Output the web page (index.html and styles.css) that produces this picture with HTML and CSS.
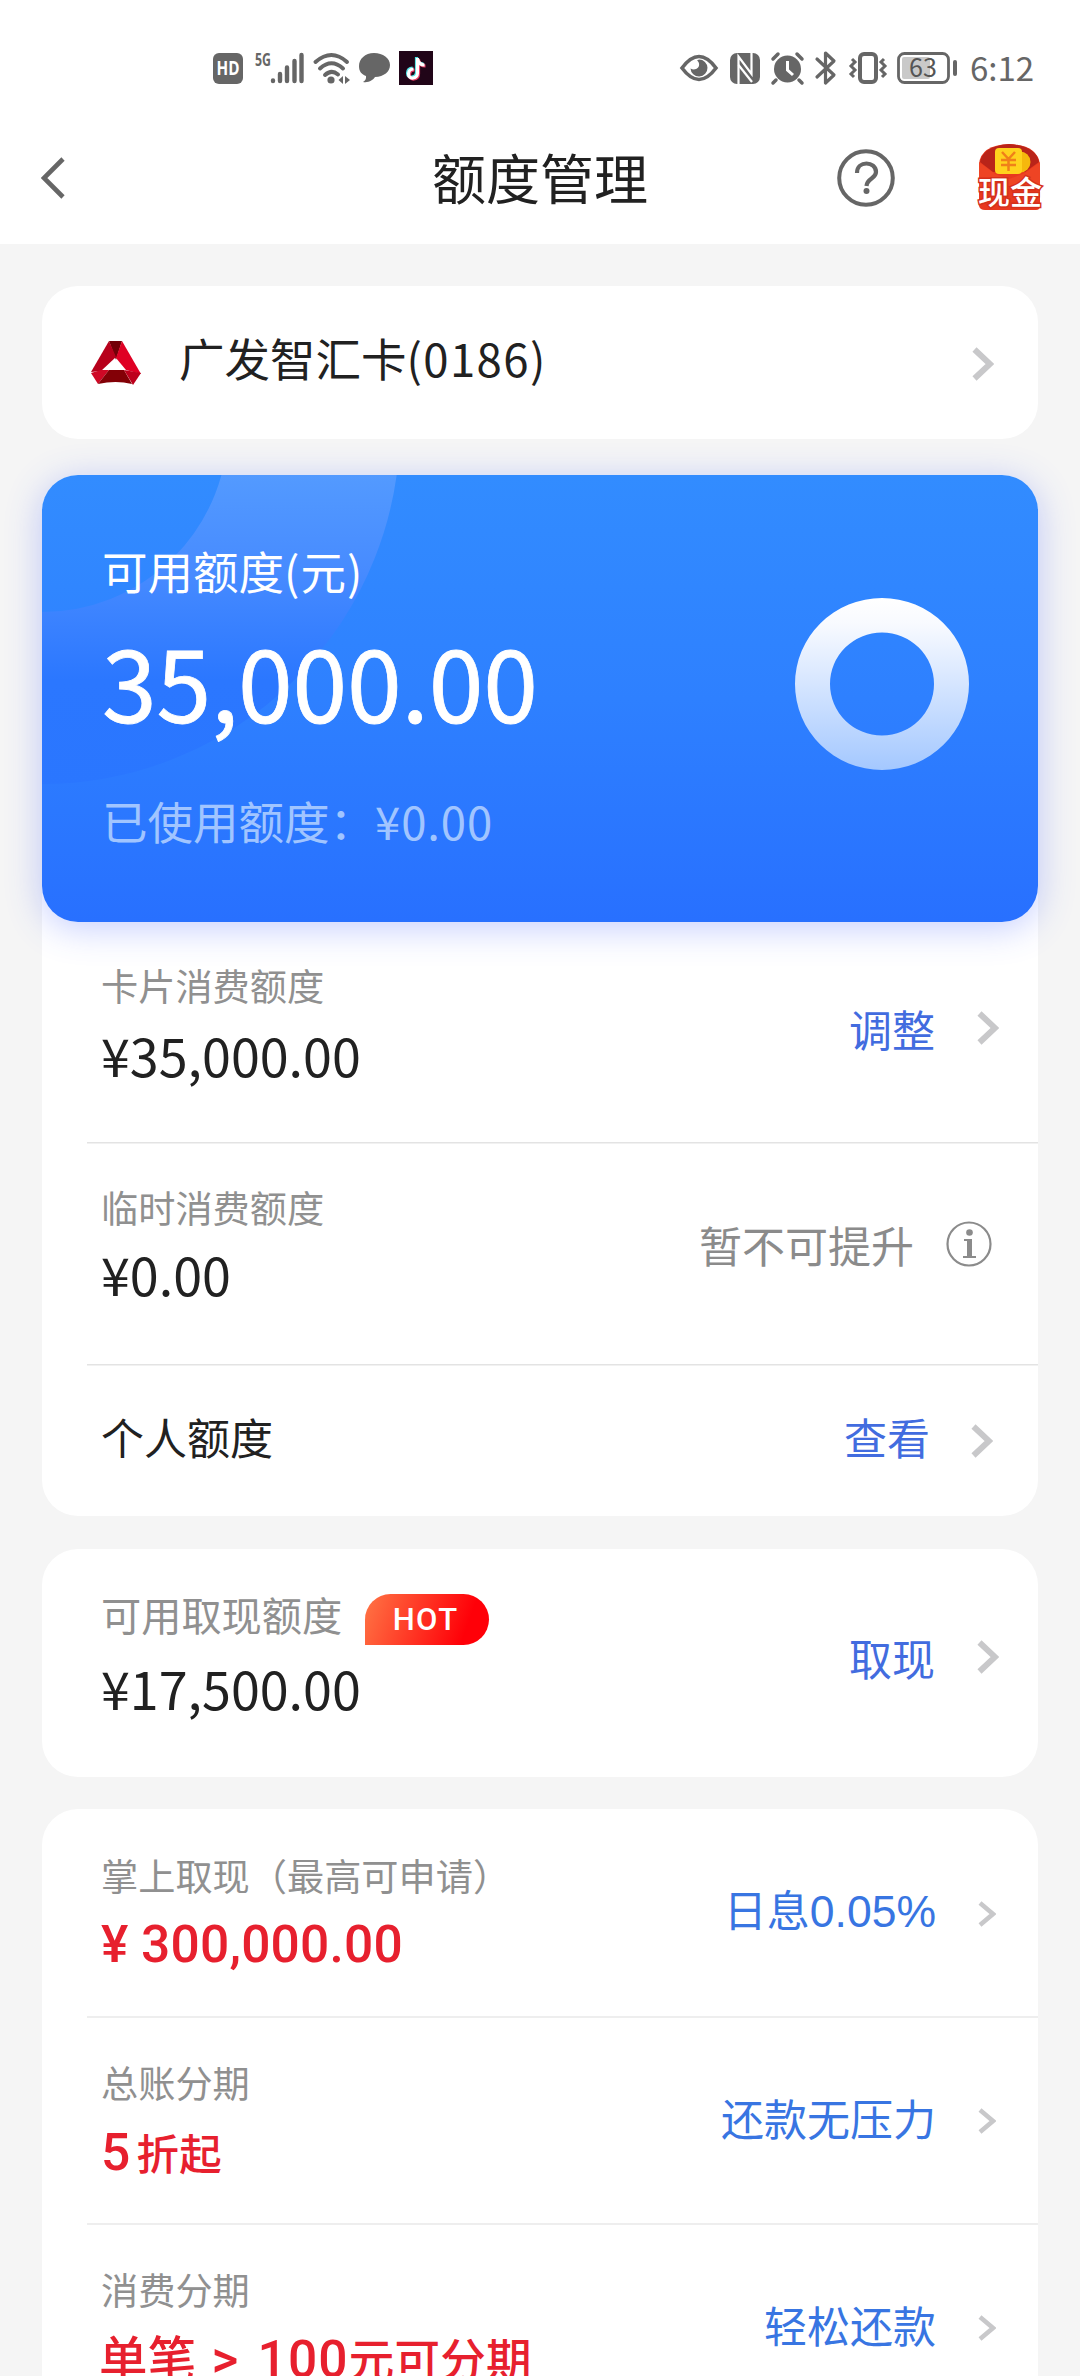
FILE: index.html
```html
<!DOCTYPE html>
<html lang="zh-CN">
<head>
<meta charset="utf-8">
<title>额度管理</title>
<link rel="stylesheet" href="styles.css">
</head>
<body>
<svg class="defs" width="0" height="0" aria-hidden="true">
  <symbol id="chevron" viewBox="0 0 22 34"><path d="M2.500 2.500 18 17 2.500 31.500" fill="none" stroke="#c8c8ca" stroke-width="6"/></symbol>
  <symbol id="chevron-small" viewBox="0 0 18 26"><path d="M2 2 15 13 2 24" fill="none" stroke="#c8c8ca" stroke-width="4.500"/></symbol>
</svg>
<div class="screen">
  <div class="statusbar">
    <div class="status-left">
      <svg width="30" height="31" viewBox="0 0 30 31"><rect width="30" height="31" rx="6" fill="#666"/><text x="15" y="22" text-anchor="middle" class="hd" textLength="23" lengthAdjust="spacingAndGlyphs">HD</text></svg>
      <svg class="signal" width="50" height="32" viewBox="0 0 50 32">
        <text x="0" y="14" class="fiveg" textLength="16" lengthAdjust="spacingAndGlyphs">5G</text>
        <path d="M18 28.500v.5M25 22v7M32 15.500v13.500M39.500 9v20M46.500 3v26" stroke="#666" stroke-width="4.400" stroke-linecap="round"/>
      </svg>
      <svg class="wifi" width="38" height="32" viewBox="0 0 38 32">
        <g fill="none" stroke="#666" stroke-width="4" stroke-linecap="round"><path d="M2.500 10Q18.500-4 34 10M7 16.500Q18.500 6 30 16.500M12 23Q18.500 17 25 22.500"/></g>
        <circle cx="18" cy="28" r="3.600" fill="#666"/><path d="M25.500 28l4.500-4v8zM32 24l5 4-5 4z" fill="#666"/>
      </svg>
      <svg class="bubble" width="33" height="32" viewBox="0 0 33 32"><path d="M16 1C7 1 1 7 1 14c0 5 2 8 7 10 .5 3-1 5-3 6 6 1 10-2 12-5 9-.5 15-5 15-12C32 6 25 1 16 1z" fill="#666"/></svg>
      <svg class="tiktok" width="34" height="34" viewBox="0 0 34 34"><rect width="34" height="34" fill="#210518"/>
        <g fill="none" stroke-width="3.200"><path d="M17.500 6v15c0 6-9 7-9 1 0-3 2-5 5-5M17.500 7c1 4 4 6 7 6" stroke="#4fe3e3"/><path d="M19.500 8v15c0 6-9 7-9 1 0-3 2-5 5-5M19.500 9c1 4 4 6 7 6" stroke="#e83a64"/><path d="M18.500 7v15c0 6-9 7-9 1 0-3 2-5 5-5M18.500 8c1 4 4 6 7 6" stroke="#fff"/></g>
      </svg>
    </div>
    <div class="status-right">
      <svg width="38" height="32" viewBox="0 0 38 32"><path d="M2 16Q19-7 36 16 19 39 2 16z" fill="none" stroke="#666" stroke-width="3.600"/><path d="M19 7.500a8.500 8.500 0 1 1-8.500 9c4 2.500 9.500 0 8.500-5-.3-1.500-1-2.500-2-3z" fill="#666"/></svg>
      <svg class="nfc" width="30" height="31" viewBox="0 0 30 31"><rect width="30" height="31" rx="7" fill="#666"/><path d="M8.500 31V3.500L21.500 21V0" fill="none" stroke="#fff" stroke-width="2.200"/><path d="M8.500 12L22 29" stroke="#fff" stroke-width="2.200" fill="none"/></svg>
      <svg class="alarm" width="33" height="32" viewBox="0 0 33 32"><circle cx="16.500" cy="17" r="13.500" fill="#666"/><path d="M2 7l5-5M31 7l-5-5M5 28l-3 3M28 28l3 3" stroke="#666" stroke-width="3.500" stroke-linecap="round"/><path d="M16.500 9v9l5.500 5" fill="none" stroke="#fff" stroke-width="3"/></svg>
      <svg class="bt" width="21" height="34" viewBox="0 0 21 34"><path d="M2 8l17 16-8.500 8V2l8.500 8L2 26" fill="none" stroke="#666" stroke-width="3.200" stroke-linejoin="round" stroke-linecap="round"/></svg>
      <svg class="vibrate" width="38" height="32" viewBox="0 0 38 32"><rect x="11" y="2" width="16" height="28" rx="4" fill="none" stroke="#666" stroke-width="4"/><path d="M3 7l3 3-4 4 4 4-4 4 3 3M35 7l-3 3 4 4-4 4 4 4-3 3" fill="none" stroke="#666" stroke-width="3"/></svg>
      <svg class="battery" width="61" height="32" viewBox="0 0 61 32"><rect x="1.500" y="1.500" width="50" height="29" rx="6" fill="none" stroke="#666" stroke-width="2.800"/><rect x="5" y="5" width="28" height="22" rx="2" fill="#c9c9c9"/><path d="M58 10v12" stroke="#666" stroke-width="4" stroke-linecap="round"/><text x="26" y="25" text-anchor="middle" class="level">63</text></svg>
      <span class="clock">6:12</span>
    </div>
  </div>

  <header class="titlebar">
    <svg class="back" width="26" height="42" viewBox="0 0 26 42"><path d="M22 2 3 21l19 19" fill="none" stroke="#666" stroke-width="4.600"/></svg>
    <h1>额度管理</h1>
    <div class="actions">
      <svg width="58" height="58" viewBox="0 0 58 58"><circle cx="29" cy="29" r="26.800" fill="none" stroke="#666" stroke-width="4"/><path d="M20 24c0-13 19-12 19-1 0 7-9 6-9.500 14" fill="none" stroke="#666" stroke-width="4.200"/><circle cx="29.500" cy="42" r="3" fill="#666"/></svg>
      <svg class="cash" width="70" height="70" viewBox="0 0 70 70">
        <path d="M4 22Q6 3 34 2 62 3 65 22v42q0 4-4 4H10q-5 0-6-4z" fill="#e8391f"/>
        <path d="M5 20Q8 4 34 2q27 2 30 18L50 30H18z" fill="#b92419"/>
        <path d="M4 20l16 12 14 5 16-6 15-11v26H4z" fill="#ee4424"/>
        <circle cx="45" cy="20" r="10.500" fill="#f6b80d"/><rect x="20" y="6" width="27" height="26" rx="4" fill="#ffd21d"/>
        <path d="M27 10l6.500 7L40 10M26 18h15M26 23h15M33.500 17v12" fill="none" stroke="#f08019" stroke-width="2.500"/>
        <text x="35" y="62" text-anchor="middle" class="cash-text">现金</text>
      </svg>
    </div>
  </header>

  <main>
    <section class="card bank">
      <svg width="50" height="44" viewBox="0 0 50 44">
        <path d="M18 0h13L25 19z" fill="#720007"/><path d="M18 0l7 16L10 30 0 31z" fill="#b7001b"/><path d="M31 0l19 33-15-4-10-12z" fill="#df0024"/>
        <path d="M0 32l10-3 8 0L7 43z" fill="#cf0825"/><path d="M18 29h15l8 14Q25 39 7 43z" fill="#830006"/><path d="M33 29l17 3-8 12z" fill="#bd001c"/><path d="M25 18l-6 11h12z" fill="#fff"/>
      </svg>
      <span class="bank-name">广发智汇卡<span class="digits">(0186)</span></span>
      <svg class="bank-arrow" width="22" height="34"><use href="#chevron"/></svg>
    </section>

    <section class="card limits">
      <div class="hero">
        <svg class="hero-arc" width="360" height="320" viewBox="0 0 360 320">
          <defs><linearGradient id="arc" x1="0" y1="0" x2="0" y2="320" gradientUnits="userSpaceOnUse"><stop offset="0" stop-color="#539aff"/><stop offset=".3" stop-color="#478bff"/><stop offset=".64" stop-color="#2b77ff"/><stop offset="1" stop-color="#2a76ff"/></linearGradient></defs>
          <circle cx="0" cy="-49" r="272" fill="none" stroke="url(#arc)" stroke-width="172"/>
        </svg>
        <div class="hero-text">
          <div class="hero-label">可用额度<span class="unit">(元)</span></div>
          <div class="hero-amount">35,000.00</div>
          <div class="hero-used">已使用额度：<span class="used-sum">¥0.00</span></div>
        </div>
        <svg class="ring" width="174" height="172" viewBox="0 0 174 172">
          <defs><linearGradient id="ring" x1="0" y1="0" x2="0" y2="172" gradientUnits="userSpaceOnUse"><stop offset="0" stop-color="#fff"/><stop offset=".15" stop-color="#f8faff"/><stop offset="1" stop-color="#a4c8ff"/></linearGradient></defs>
          <path fill-rule="evenodd" fill="url(#ring)" d="M87 0a87 86 0 0 1 0 172a87 86 0 0 1 0-172zM87 34.500a52 51.500 0 0 0 0 103a52 51.500 0 0 0 0-103z"/>
        </svg>
      </div>
      <div class="row r-card">
        <div><div class="label">卡片消费额度</div><div class="amount">¥35,000.00</div></div>
        <div class="side"><span>调整</span><svg width="22" height="34"><use href="#chevron"/></svg></div>
      </div>
      <div class="row r-temp">
        <div><div class="label">临时消费额度</div><div class="amount">¥0.00</div></div>
        <div class="side muted"><span>暂不可提升</span>
          <svg width="46" height="46" viewBox="0 0 46 46"><circle cx="23" cy="23" r="21.500" fill="none" stroke="#8b8b8b" stroke-width="2.200"/><circle cx="23.500" cy="11.500" r="3.300" fill="#8b8b8b"/><path d="M18 18h8v17h4v2H17v-2h4V20h-3z" fill="#8b8b8b"/></svg></div>
      </div>
      <div class="row r-personal">
        <div class="name">个人额度</div>
        <div class="side"><span>查看</span><svg width="22" height="34"><use href="#chevron"/></svg></div>
      </div>
    </section>

    <section class="card withdraw">
      <div class="row">
        <div><div class="label large">可用取现额度<span class="hot">HOT</span></div><div class="amount">¥17,500.00</div></div>
        <div class="side"><span>取现</span><svg width="22" height="34"><use href="#chevron"/></svg></div>
      </div>
    </section>

    <section class="card offers">
      <div class="row">
        <div><div class="label">掌上取现（最高可申请）</div><div class="promo"><span class="yen">¥</span>300,000.00</div></div>
        <div class="side"><span>日息<span class="rate">0.05%</span></span><svg width="18" height="26"><use href="#chevron-small"/></svg></div>
      </div>
      <div class="row">
        <div><div class="label">总账分期</div><div class="promo">5<span class="zh">折起</span></div></div>
        <div class="side"><span>还款无压力</span><svg width="18" height="26"><use href="#chevron-small"/></svg></div>
      </div>
      <div class="row">
        <div><div class="label">消费分期</div><div class="promo last"><span class="zh wide">单笔</span><span class="gt">&gt;</span><span class="num">100</span><span class="zh mid">元可分期</span></div></div>
        <div class="side"><span>轻松还款</span><svg width="18" height="26"><use href="#chevron-small"/></svg></div>
      </div>
    </section>
  </main>
</div>
</body>
</html>
```

FILE: styles.css
```css
* { box-sizing: border-box; }
body { margin: 0; background: #f5f5f5; font-family: "Noto Sans CJK SC", sans-serif; color: #212121; }
svg { display: block; flex: none; }
.defs { position: absolute; }
.screen { width: 1080px; height: 2376px; overflow: hidden; }

.statusbar { height: 110px; padding: 26px 46px 0 213px; background: #fff; display: flex; justify-content: space-between; align-items: center; }
.statusbar svg { overflow: visible; }
.status-left, .status-right { display: flex; align-items: center; }
.signal { margin-left: 12px; }
.wifi { margin-left: 8px; }
.bubble { margin-left: 7px; }
.tiktok { margin-left: 8px; }
.nfc { margin-left: 12px; }
.alarm { margin-left: 11px; }
.bt { margin-left: 11px; }
.vibrate { margin-left: 13px; }
.battery { margin-left: 10px; }
.clock { margin-left: 12px; width: 64px; font-size: 33px; line-height: 50px; margin-top: -2px; color: #666; white-space: nowrap; }
.hd { font: 700 20px "Open Sans", sans-serif; fill: #fff; }
.fiveg { font: 700 18px "Open Sans", sans-serif; fill: #666; }
.level { font: 400 25px "Noto Sans CJK SC", sans-serif; fill: #555; }

.titlebar { height: 134px; padding: 0 36px 0 41px; background: #fff; display: grid; grid-template-columns: 1fr auto 1fr; align-items: center; }
.titlebar h1 { margin: 0; font-size: 54px; font-weight: 400; line-height: 80px; padding-right: 5px; }
.actions { display: flex; align-items: center; justify-content: flex-end; gap: 80px; }
.back { margin-top: 2px; }
.actions svg:first-child { margin-top: 2px; }
.cash-text { font: 500 32px "Noto Sans CJK SC", sans-serif; fill: #fff; stroke: #d5301c; stroke-width: 3px; paint-order: stroke; }
.cash { overflow: visible; margin-right: -1px; }

main { padding: 42px 42px 0; }
.card { background: #fff; border-radius: 36px; }
.bank { height: 153px; padding: 0 44px 0 49px; display: flex; align-items: center; }
.bank-name { margin-left: 38px; font-size: 45.500px; line-height: 66px; margin-top: -11px; }
.digits { letter-spacing: 1.400px; }
.bank-arrow { margin-left: auto; margin-top: 2px; }

.limits { margin-top: 36px; height: 1041px; }
.hero { position: relative; height: 447px; border-radius: 36px; background: linear-gradient(#328cff, #2e80ff 50%, #2870ff); box-shadow: 0 6px 36px rgba(60, 90, 255, .3); display: flex; justify-content: space-between; padding: 0 69px 0 60px; color: #fff; }
.hero-arc { position: absolute; left: 0; top: 0; border-top-left-radius: 36px; overflow: hidden; }
.hero-text { position: relative; padding-top: 62px; white-space: nowrap; }
.hero-label { font-size: 45.500px; line-height: 66px; }
.unit { letter-spacing: 1px; }
.hero-amount { font-size: 98.500px; line-height: 120px; margin-top: 17px; letter-spacing: -.2px; -webkit-text-stroke: .8px #fff; }
.hero-used { font-size: 45.500px; line-height: 66px; margin-top: 47px; color: #a1c5ff; }
.used-sum { letter-spacing: .9px; }
.ring { margin-top: 123px; }

.row { display: flex; justify-content: space-between; position: relative; padding-left: 59px; }
.label { font-size: 37.200px; line-height: 50px; color: #909090; white-space: nowrap; }
.label.large { display: flex; align-items: center; font-size: 40.200px; line-height: 54px; }
.amount { font-size: 52px; line-height: 70px; }
.name { font-size: 43px; line-height: 60px; }
.side { display: flex; align-items: center; height: 60px; gap: 42px; padding-right: 39px; font-size: 43px; line-height: 60px; color: #426cdf; white-space: nowrap; }
.r-card { height: 220px; padding-top: 38px; }
.r-card .amount { margin-top: 10px; }
.r-card .side { margin-top: 38px; }
.r-temp { height: 222px; padding-top: 40px; }
.r-temp .amount { margin-top: 7px; }
.side.muted { margin-top: 32px; gap: 32px; padding-right: 46px; color: #8b8b8b; }
.r-temp, .r-personal, .offers .row + .row { background: linear-gradient(#e3e3e3, #e3e3e3) 45px 0 / calc(100% - 45px) 2px no-repeat; }
.r-temp, .r-personal { background-position-y: -.5px; }
.r-personal { padding-top: 42px; }
.r-personal .side { gap: 41px; padding-right: 45px; }
.r-personal .side svg { margin-top: 10px; }

.withdraw { margin-top: 33px; height: 228px; padding-top: 38px; }
.withdraw .amount { margin-top: 12px; }
.withdraw .side { margin-top: 40px; }
.hot { margin-left: 23px; margin-top: 11px; width: 124px; height: 51px; border-radius: 26px 26px 26px 0; background: linear-gradient(110deg, #ff7545, #ff0008 80%); color: #fff; font: 500 31px/51px Roboto, sans-serif; letter-spacing: 1.500px; text-align: center; padding-right: 3px; }
.withdraw .label { height: 54px; }

.offers { margin-top: 32px; height: 700px; }
.offers .row { height: 207px; padding-top: 41px; }
.offers .row + .row { background-image: linear-gradient(#eee, #eee); }
.offers .side { margin-top: 30px; color: #3875e2; padding-right: 42px; }
.offers .side svg { margin-top: 8px; }
.rate { font-family: "Liberation Sans", sans-serif; font-size: 44.500px; }
.promo { display: flex; align-items: baseline; margin-top: 15px; height: 60px; font: 500 51.500px/60px Roboto, sans-serif; letter-spacing: .2px; color: #e7202e; white-space: nowrap; }
.yen { width: 40px; }
.zh { font: 500 42.500px/60px "Noto Sans CJK SC", sans-serif; margin-left: 6px; }
.zh.wide { font-size: 48.500px; margin-left: -2px; }
.zh.mid { font-size: 45.500px; margin-left: 0; }
.promo.last { margin-top: 12px; }
.gt { margin-left: 15px; width: 46px; }
.num { letter-spacing: 1.200px; }
```
